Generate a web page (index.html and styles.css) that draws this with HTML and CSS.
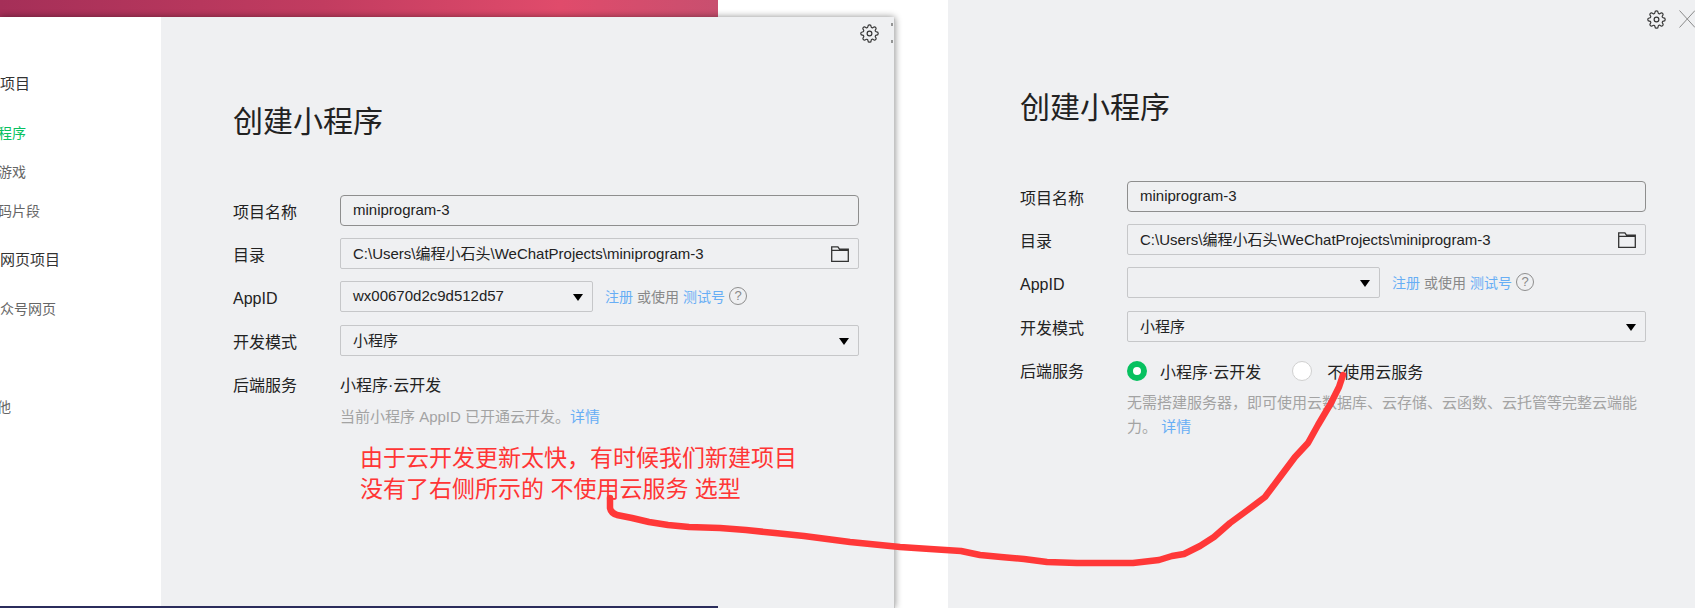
FILE: index.html
```html
<!DOCTYPE html>
<html lang="zh-CN">
<head>
  <meta charset="UTF-8" />
  <title>创建小程序</title>
  <link rel="stylesheet" href="styles.css">
</head>
<body>
  <svg class="defs" width="0" height="0">
    <symbol id="gear" viewBox="0 0 24 24">
      <path d="M12 15a3 3 0 1 0 0-6 3 3 0 0 0 0 6z"/>
      <path d="M19.4 15a1.65 1.65 0 0 0 .33 1.82l.06.06a2 2 0 0 1 0 2.83 2 2 0 0 1-2.83 0l-.06-.06a1.65 1.65 0 0 0-1.82-.33 1.65 1.65 0 0 0-1 1.51V21a2 2 0 0 1-2 2 2 2 0 0 1-2-2v-.09A1.65 1.65 0 0 0 9 19.4a1.65 1.65 0 0 0-1.82.33l-.06.06a2 2 0 0 1-2.83 0 2 2 0 0 1 0-2.83l.06-.06a1.65 1.65 0 0 0 .33-1.82 1.65 1.65 0 0 0-1.51-1H3a2 2 0 0 1-2-2 2 2 0 0 1 2-2h.09A1.65 1.65 0 0 0 4.6 9a1.65 1.65 0 0 0-.33-1.82l-.06-.06a2 2 0 0 1 0-2.83 2 2 0 0 1 2.83 0l.06.06a1.65 1.65 0 0 0 1.82.33H9a1.65 1.65 0 0 0 1-1.51V3a2 2 0 0 1 2-2 2 2 0 0 1 2 2v.09a1.65 1.65 0 0 0 1 1.51 1.65 1.65 0 0 0 1.82-.33l.06-.06a2 2 0 0 1 2.83 0 2 2 0 0 1 0 2.83l-.06.06a1.65 1.65 0 0 0-.33 1.82V9a1.65 1.65 0 0 0 1.51 1H21a2 2 0 0 1 2 2 2 2 0 0 1-2 2h-.09a1.65 1.65 0 0 0-1.51 1z"/>
    </symbol>
    <symbol id="folder" viewBox="0 0 18 16">
      <path d="M.7 15.3V.8h6.2l1.6 2.4h8.8v12.1z M.7 4.4h16.6"/>
    </symbol>
  </svg>

  <div class="banner"></div>
  <div class="strip"></div>

  <!-- ventana izquierda -->
  <div class="window window-left">
    <div class="sidebar">
      <div class="side-head side-first">小程序项目</div>
      <div class="side-item side-active">小程序</div>
      <div class="side-item">小游戏</div>
      <div class="side-item">代码片段</div>
      <div class="side-head side-web">公众号网页项目</div>
      <div class="side-item side-web-item">公众号网页</div>
      <div class="side-item side-other">其他</div>
    </div>
    <div class="panel">
      <svg class="gear"><use href="#gear"/></svg>
      <svg class="edge-marks" viewBox="0 0 2 20"><path d="M1 0v3M1 17v3"/></svg>
      <h1 class="title">创建小程序</h1>
      <div class="row">
        <span class="label">项目名称</span>
        <div class="field field-focus">miniprogram-3</div>
      </div>
      <div class="row">
        <span class="label">目录</span>
        <div class="field">C:\Users\编程小石头\WeChatProjects\miniprogram-3<svg class="folder"><use href="#folder"/></svg></div>
      </div>
      <div class="row">
        <span class="label">AppID</span>
        <div class="appid">
          <div class="field field-short">wx00670d2c9d512d57<i class="arrow"></i></div>
          <div class="links"><a>注册</a> 或使用 <a>测试号</a><span class="help">?</span></div>
        </div>
      </div>
      <div class="row row-mode">
        <span class="label">开发模式</span>
        <div class="field">小程序<i class="arrow"></i></div>
      </div>
      <div class="row row-backend">
        <span class="label">后端服务</span>
        <div class="value">小程序·云开发</div>
      </div>
      <p class="hint">当前小程序 AppID 已开通云开发。<a>详情</a></p>
      <p class="note">由于云开发更新太快，有时候我们新建项目<br>没有了右侧所示的 不使用云服务 选型</p>
    </div>
  </div>

  <!-- ventana derecha -->
  <div class="window window-right">
    <div class="panel">
      <svg class="gear"><use href="#gear"/></svg>
      <svg class="close" viewBox="0 0 16 18"><path d="M.5.5 16 17.5M16 .5.5 17.5"/></svg>
      <h1 class="title">创建小程序</h1>
      <div class="row">
        <span class="label">项目名称</span>
        <div class="field field-focus">miniprogram-3</div>
      </div>
      <div class="row">
        <span class="label">目录</span>
        <div class="field">C:\Users\编程小石头\WeChatProjects\miniprogram-3<svg class="folder"><use href="#folder"/></svg></div>
      </div>
      <div class="row">
        <span class="label">AppID</span>
        <div class="appid">
          <div class="field field-short"><span></span><i class="arrow"></i></div>
          <div class="links"><a>注册</a> 或使用 <a>测试号</a><span class="help">?</span></div>
        </div>
      </div>
      <div class="row row-mode">
        <span class="label">开发模式</span>
        <div class="field">小程序<i class="arrow"></i></div>
      </div>
      <div class="row row-backend">
        <span class="label">后端服务</span>
        <div class="radios">
          <span class="radio radio-on"></span><span class="radio-text">小程序·云开发</span>
          <span class="radio radio-off"></span><span class="radio-text">不使用云服务</span>
        </div>
      </div>
      <p class="hint">无需搭建服务器，即可使用云数据库、云存储、云函数、云托管等完整云端能力。 <a>详情</a></p>
    </div>
  </div>

  <svg class="stroke" viewBox="0 0 1695 608">
    <path d="M610 498 610 508 Q611 513 617 515 L632 518 649 522 668 525 689 527 720 528 746 530 775 533 804 536 850 542 900 547 930 549 961 551 980 555 1001 557 1024 559 1047 562 1077 563 1105 563 1133 563 1159 560 1172 556 1184 554 1200 546 1214 537 1230 523 1245 512 1265 497 1280 477 1295 457 1308 443 1318 425 1331 403 1339 387 1343 375"/>
  </svg>
</body>
</html>
```

FILE: styles.css
```css
* {
  box-sizing: border-box;
}

html, body {
  margin: 0;
  height: 100%;
}

body {
  position: relative;
  width: 1695px;
  height: 608px;
  overflow: hidden;
  background: #fff;
  font-family: "Liberation Sans", "Noto Sans CJK SC", sans-serif;
  color: #222;
}

.defs {
  position: absolute;
}

.banner {
  position: absolute;
  left: 0;
  top: 0;
  width: 718px;
  height: 17px;
  background: linear-gradient(90deg, #a52f58 0%, #c23c60 45%, #e04b6b 78%, #c84f6f 100%);
}

.strip {
  position: absolute;
  left: 0;
  bottom: 0;
  width: 718px;
  height: 2px;
  background: #2b2d5c;
  z-index: 2;
}

.window {
  position: absolute;
  display: flex;
  overflow: hidden;
}

.window-left {
  left: 0;
  top: 17px;
  width: 895px;
  height: 591px;
  overflow: visible;
  box-shadow: 0 0 7px rgba(0, 0, 0, 0.45);
  border-right: 1px solid #c4c4c4;
  border-top-right-radius: 3px;
}

.window-right {
  left: 948px;
  top: 0;
  width: 747px;
  height: 608px;
}

.sidebar {
  width: 161px;
  height: 100%;
  background: #fff;
  overflow: hidden;
  white-space: nowrap;
  flex-shrink: 0;
}

.side-head {
  height: 22px;
  line-height: 22px;
  margin-left: -45px;
  font-size: 15px;
  color: #333;
}

.side-item {
  height: 22px;
  line-height: 22px;
  margin-left: -16px;
  margin-top: 17px;
  font-size: 14px;
  color: #666;
}

.side-first {
  margin-top: 56px;
}

.side-active {
  margin-top: 27px;
  color: #07c160;
}

.side-web {
  margin-top: 27px;
}

.side-web-item {
  margin-top: 27px;
  margin-left: -14px;
}

.side-other {
  margin-top: 76px;
  margin-left: -17px;
}

.panel {
  position: relative;
  flex: 1;
  background: #eff0f2;
  padding-left: 72px;
  padding-top: 85px;
}

.window-right .panel {
  padding-top: 88px;
}

.gear {
  position: absolute;
  right: 15px;
  top: 7px;
  width: 19px;
  height: 19px;
  fill: none;
  stroke: #333;
  stroke-width: 1.5;
}

.window-right .gear {
  right: 29px;
  top: 10px;
}

.edge-marks {
  position: absolute;
  right: 1px;
  top: 6px;
  width: 2px;
  height: 20px;
  fill: none;
  stroke: #777;
  stroke-width: 1.5;
}

.close {
  position: absolute;
  right: 0;
  top: 10px;
  width: 16px;
  height: 18px;
  fill: none;
  stroke: #8a8a8a;
  stroke-width: 1;
}

.title {
  margin: 0 0 53px;
  height: 40px;
  line-height: 40px;
  font-size: 30px;
  font-weight: 400;
  color: #222;
}

.row {
  display: flex;
  width: 626px;
  margin-bottom: 12px;
}

.row-mode {
  margin-top: 13px;
}

.label {
  width: 107px;
  flex-shrink: 0;
  padding-top: 6px;
  line-height: 24px;
  font-size: 16px;
}

.field {
  flex: 1;
  height: 31px;
  padding: 0 9px 2px 12px;
  display: flex;
  align-items: center;
  justify-content: space-between;
  border: 1px solid #c6c7c9;
  border-radius: 2px;
  font-size: 15px;
}

.field-focus {
  border-color: #8e8e8e;
  border-radius: 4px;
}

.field-short {
  flex: none;
  width: 253px;
  padding-right: 9px;
}

.appid {
  flex: 1;
  display: flex;
  align-items: center;
}

.folder {
  width: 18px;
  height: 16px;
  margin-top: 3px;
  fill: none;
  stroke: #333;
  stroke-width: 1.3;
}

.arrow {
  width: 0;
  height: 0;
  border-left: 5px solid transparent;
  border-right: 5px solid transparent;
  border-top: 7px solid #000;
  margin-top: 4px;
}

.links {
  margin-left: 12px;
  margin-top: -1px;
  display: flex;
  align-items: center;
  gap: 4px;
  font-size: 14px;
  color: #888;
}

.links a, .hint a {
  color: #67aef5;
}

.help {
  width: 18px;
  height: 18px;
  border: 1px solid #8e8e8e;
  border-radius: 50%;
  font-size: 13px;
  line-height: 16px;
  text-align: center;
}

.row-backend {
  margin: 12px 0 0;
}

.value {
  padding-top: 6px;
  line-height: 24px;
  font-size: 16px;
}

.radios {
  display: flex;
  align-items: center;
  height: 24px;
  margin-top: 5px;
  font-size: 16px;
}

.radio {
  width: 20px;
  height: 20px;
  border-radius: 50%;
  background: #fff;
  border: 1px solid #d0d0d0;
  margin-right: 13px;
}

.radio-on {
  border: 6px solid #07c160;
}

.radio-off {
  margin-right: 15px;
}

.radio-text {
  margin-right: 31px;
}

.hint {
  width: 512px;
  margin: 7px 0 0 107px;
  font-size: 15px;
  line-height: 24px;
  color: #a3a3a3;
}

.note {
  margin: 14px 0 0 127px;
  font-size: 23px;
  line-height: 31px;
  color: #ff3535;
}

.stroke {
  position: absolute;
  left: 0;
  top: 0;
  width: 1695px;
  height: 608px;
  fill: none;
  stroke: #ff3838;
  stroke-width: 6.5;
  stroke-linecap: round;
  stroke-linejoin: round;
  z-index: 3;
}
```
